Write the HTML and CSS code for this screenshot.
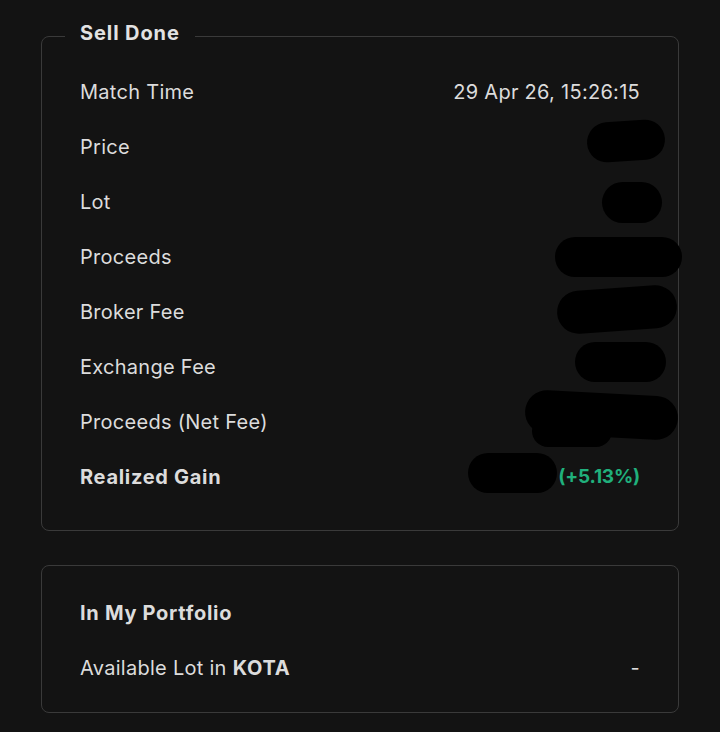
FILE: index.html
```html
<!DOCTYPE html>
<html>
<head>
<meta charset="utf-8">
<link rel="stylesheet" href="styles.css">
</head>
<body>
<main class="page">
  <fieldset class="card">
    <legend class="card-title">Sell Done</legend>
    <div class="rows">
      <div class="row"><span class="label">Match Time</span><span class="value">29 Apr 26, 15:26:15</span></div>
      <div class="row"><span class="label">Price</span><span class="blot blot-price"></span></div>
      <div class="row"><span class="label">Lot</span><span class="blot blot-lot"></span></div>
      <div class="row"><span class="label">Proceeds</span><span class="blot blot-proceeds"></span></div>
      <div class="row"><span class="label">Broker Fee</span><span class="blot blot-broker"></span></div>
      <div class="row"><span class="label">Exchange Fee</span><span class="blot blot-exchange"></span></div>
      <div class="row"><span class="label">Proceeds (Net Fee)</span><span class="blot blot-net"></span><span class="blot blot-net2"></span></div>
      <div class="row"><span class="label strong">Realized Gain</span><span class="blot blot-gain"></span><span class="value gain">(+5.13%)</span></div>
    </div>
  </fieldset>

  <section class="card2">
    <div class="row"><span class="label strong">In My Portfolio</span></div>
    <div class="row"><span class="label">Available Lot in <b>KOTA</b></span><span class="value">-</span></div>
  </section>
</main>
</body>
</html>
```

FILE: styles.css
```css
html, body {
  margin: 0;
  background: #131313;
}
body {
  font-family: Inter, "Noto Sans", sans-serif;
  color: #dcdcdc;
  font-size: 20px;
  letter-spacing: 0.28px;
}
.page {
  padding: 21px 41px 20px;
  display: flex;
  flex-direction: column;
  gap: 34px;
}
.card {
  margin: 0;
  border: 1px solid #3a3a3a;
  border-radius: 8px;
  padding: 0 38px 26px;
  min-inline-size: 0;
}
.card-title {
  padding: 0 15px 6px;
  margin-left: -15px;
  font-weight: 700;
  font-size: 20px;
  line-height: 24px;
  letter-spacing: 0.9px;
  color: #e2e2e2;
}
.rows {
  margin-top: 13px;
  display: flex;
  flex-direction: column;
}
.row {
  position: relative;
  height: 55px;
  display: flex;
  align-items: center;
  justify-content: space-between;
}
.label b, .strong {
  font-weight: 700;
  letter-spacing: 0.7px;
}
.value {
  margin-left: auto;
}
.gain {
  color: #20b07c;
  font-weight: 700;
  font-size: 19px;
  letter-spacing: -0.2px;
}
.blot {
  position: absolute;
  background: #000;
  border-radius: 999px;
}
.blot-price { right: -25px; width: 78px; top: 2px; height: 40px; transform: rotate(-4deg); }
.blot-lot { right: -22px; width: 60px; top: 8px; height: 41px; }
.blot-proceeds { right: -42px; width: 127px; top: 8px; height: 40px; }
.blot-broker { right: -37px; width: 120px; top: 4px; height: 43px; transform: rotate(-4deg); }
.blot-exchange { right: -26px; width: 91px; top: 3px; height: 40px; }
.blot-net { right: -38px; width: 153px; top: -1px; height: 44px; transform: rotate(3deg); }
.blot-net2 { right: 28px; width: 80px; top: 21px; height: 32px; }
.blot-gain { right: 83px; width: 89px; top: 4px; height: 40px; }
.card2 {
  border: 1px solid #3a3a3a;
  border-radius: 8px;
  padding: 19px 38px 17px;
}
```
